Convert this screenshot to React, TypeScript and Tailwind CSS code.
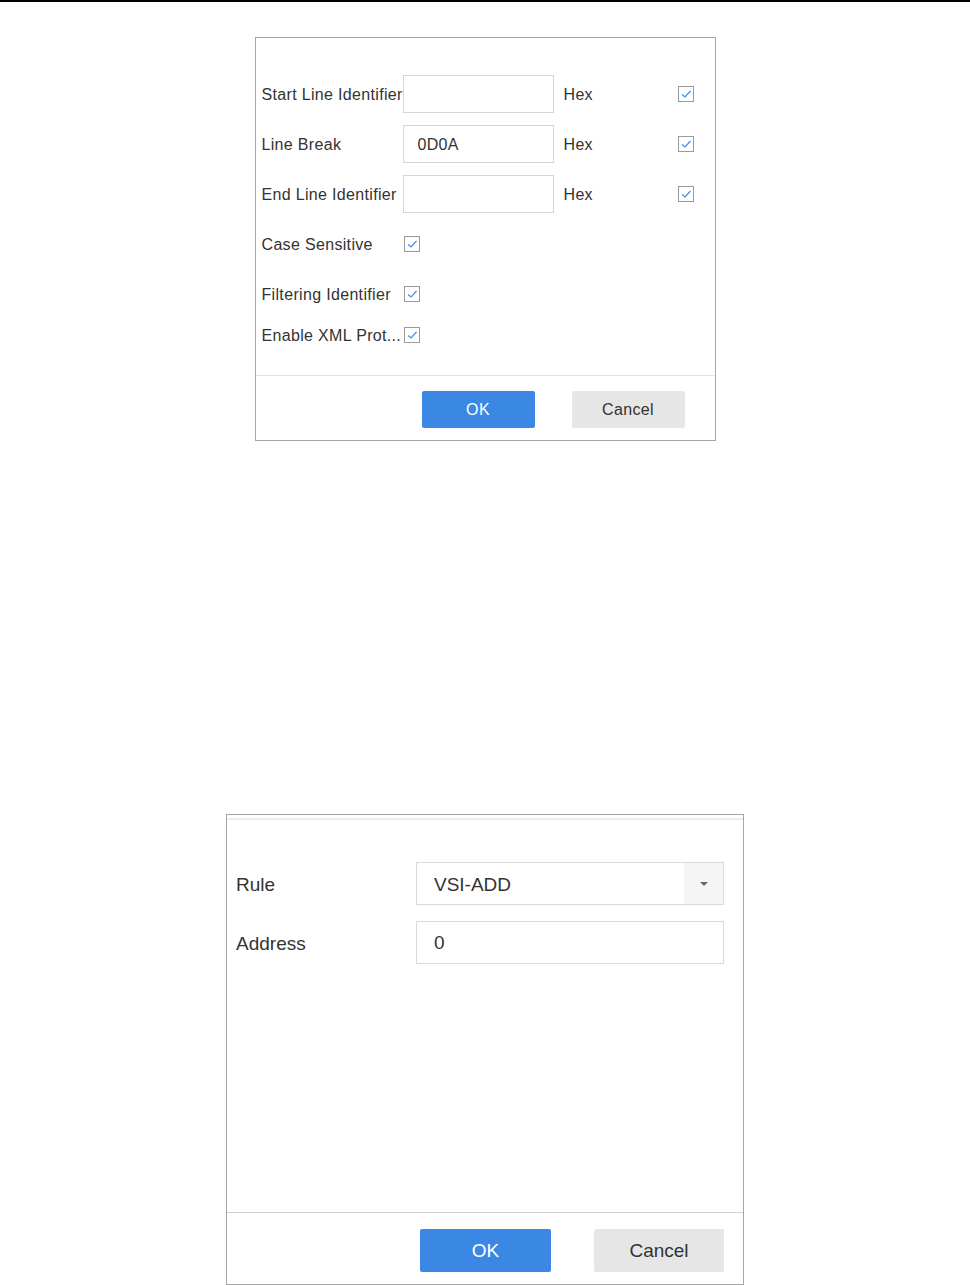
import React from 'react';

function Check() {
  return (
    <span className="flex h-[16px] w-[16px] shrink-0 items-center justify-center border border-[#9a9a9a] bg-white">
      <svg width="14" height="14" viewBox="0 0 14 14" fill="none">
        <path d="M3 7.5 L6 10 L11.5 4" stroke="#3f8fe8" strokeWidth="1.2" />
      </svg>
    </span>
  );
}

const hexRows = [
  { label: 'Start Line Identifier', value: '' },
  { label: 'Line Break', value: '0D0A' },
  { label: 'End Line Identifier', value: '' },
];

const checkRows = ['Case Sensitive', 'Filtering Identifier'];

function SerialDialog() {
  return (
    <div className="mx-auto mt-[35px] flex h-[404px] w-[461px] flex-col border border-[#a6a6a6] bg-white text-[16px] text-[#333] font-['Liberation_Sans',Arial,sans-serif] tracking-[0.33px]">
      <div className="flex flex-1 flex-col pl-[6px] pt-[31px]">
        {hexRows.map((r) => (
          <div key={r.label} className="flex h-[50px] items-center">
            <span className="w-[141px] overflow-hidden whitespace-nowrap pt-px">{r.label}</span>
            <div className="flex h-[38px] w-[151px] items-center border border-[#d6d6d6] px-[14px] pt-px">{r.value}</div>
            <span className="ml-[10px] w-[114px] pt-px">Hex</span>
            <Check />
          </div>
        ))}
        {checkRows.map((l) => (
          <div key={l} className="flex h-[50px] items-center">
            <span className="w-[142px] whitespace-nowrap pt-px">{l}</span>
            <Check />
          </div>
        ))}
        <div className="flex h-[32px] items-center">
          <span className="w-[142px] overflow-hidden whitespace-nowrap pt-px">Enable XML Prot...</span>
          <Check />
        </div>
      </div>
      <div className="flex justify-end gap-[37px] border-t border-[#e3e3e3] pb-[12px] pr-[30px] pt-[15px]">
        <button className="h-[37px] w-[113px] rounded-[2px] bg-[#3a88e4] pt-px text-white">OK</button>
        <button className="h-[37px] w-[113px] rounded-[2px] bg-[#e6e6e6] pt-px text-[#333]">Cancel</button>
      </div>
    </div>
  );
}

function ProtocolDialog() {
  return (
    <div className="mx-auto mt-[373px] flex h-[471px] w-[518px] flex-col border border-[#a6a6a6] bg-white text-[19px] text-[#333] font-['Liberation_Sans',Arial,sans-serif]">
      <div className="h-[5px] border-b-2 border-[#ececec]" />
      <div className="flex flex-1 flex-col gap-[16px] pl-[9px] pt-[42px]">
        <div className="flex items-center">
          <span className="w-[180px] pt-[4px]">Rule</span>
          <div className="flex h-[43px] w-[308px] items-stretch border border-[#d9d9d9]">
            <span className="flex flex-1 items-center pl-[17px] pt-[3px]">VSI-ADD</span>
            <span className="flex w-[39px] items-center justify-center bg-[#f5f5f5]">
              <svg width="10" height="6" viewBox="0 0 10 6">
                <path d="M1 1 H9 L5 5 Z" fill="#666" />
              </svg>
            </span>
          </div>
        </div>
        <div className="flex items-center">
          <span className="w-[180px] pt-[4px]">Address</span>
          <div className="flex h-[43px] w-[308px] items-center border border-[#d9d9d9] pl-[17px] pt-[2px]">0</div>
        </div>
      </div>
      <div className="flex justify-end gap-[43px] border-t border-[#d2d2d2] pb-[12px] pr-[19px] pt-[16px]">
        <button className="h-[43px] w-[131px] rounded-[2px] bg-[#3a88e4] pt-px text-white">OK</button>
        <button className="h-[43px] w-[130px] rounded-[2px] bg-[#e6e6e6] pt-px text-[#333]">Cancel</button>
      </div>
    </div>
  );
}

export default function App() {
  return (
    <div className="min-h-[1285px] w-full bg-white">
      <div className="h-[2px] w-full bg-black" />
      <SerialDialog />
      <ProtocolDialog />
    </div>
  );
}
